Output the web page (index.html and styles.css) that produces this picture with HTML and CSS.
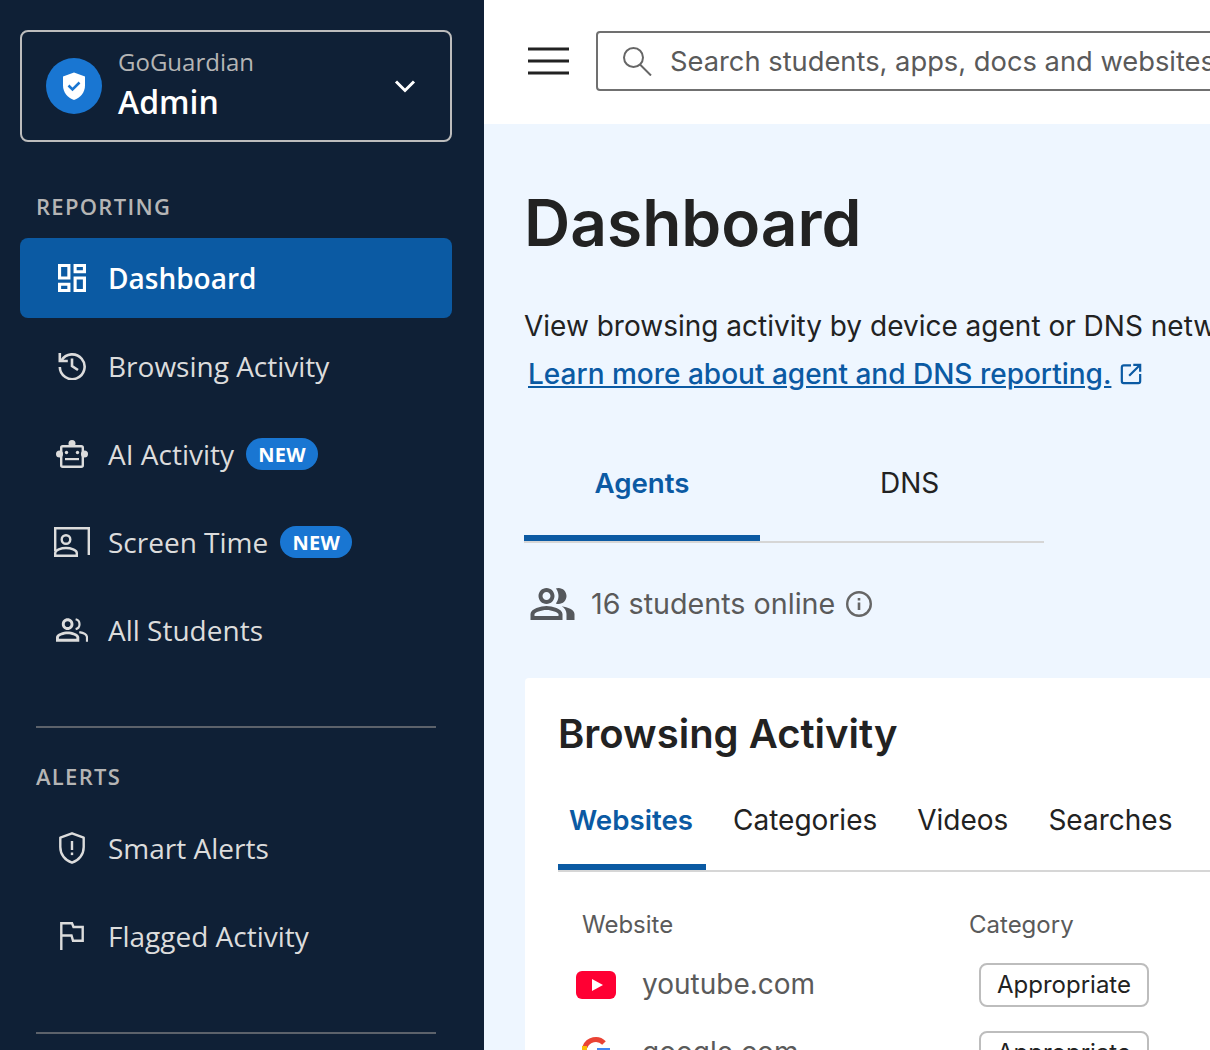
FILE: index.html
```html
<!DOCTYPE html>
<html lang="en">
<head>
<meta charset="utf-8">
<title>GoGuardian Admin Dashboard</title>
<link rel="stylesheet" href="styles.css">
</head>
<body>
<div class="app">
  <aside class="sidebar">
    <div class="brand">
      <svg class="brand-logo" viewBox="0 0 56 56"><circle cx="28" cy="28" r="28" fill="#1976d2"/><path d="M28 14.500l11 4v9c0 7-4.500 12-11 14.500-6.500-2.500-11-7.500-11-14.500v-9z" fill="#fff"/><path d="M22.500 27.500l4 4 7-7" fill="none" stroke="#1976d2" stroke-width="2.500"/></svg>
      <div class="brand-text">
        <span class="brand-company">GoGuardian</span>
        <span class="brand-product">Admin</span>
      </div>
      <svg class="brand-chevron" viewBox="0 0 22 14"><path d="M2 2.500l9 9 9-9" fill="none" stroke="#fff" stroke-width="3"/></svg>
    </div>

    <h2 class="nav-heading">REPORTING</h2>
    <ul class="nav-list">
      <li class="nav-item nav-item-active">
        <span class="nav-icon"><svg class="ic-dash" viewBox="3 3 18 18" fill="currentColor"><path d="M19 5v2h-4V5h4M9 5v6H5V5h4m10 8v6h-4v-6h4M9 17v2H5v-2h4M21 3h-8v6h8V3zM11 3H3v10h8V3zm10 8h-8v10h8V11zm-10 4H3v6h8v-6z"/></svg></span>
        <span>Dashboard</span>
      </li>
      <li class="nav-item">
        <span class="nav-icon"><svg class="ic-history" viewBox="0 0 28 28" fill="none" stroke="currentColor" stroke-width="2.600"><path d="M3.500 8.500A12.400 12.400 0 1 1 1.800 15"/><path d="M1.800 1v8h8"/><path d="M14 6.500V14l6 4"/></svg></span>
        <span>Browsing Activity</span>
      </li>
      <li class="nav-item">
        <span class="nav-icon"><svg class="ic-robot" viewBox="0 0 32 28" fill="currentColor"><rect x="5.200" y="6.200" width="21.600" height="20.600" rx="1.500" fill="none" stroke="currentColor" stroke-width="2.400"/><circle cx="16" cy="3.500" r="3.500"/><circle cx="3.500" cy="14" r="3.500"/><circle cx="28.500" cy="14" r="3.500"/><circle cx="10.500" cy="12.500" r="1.700"/><circle cx="21.500" cy="12.500" r="1.700"/><rect x="9" y="18" width="14" height="2.200"/></svg></span>
        <span>AI Activity</span><span class="badge">NEW</span>
      </li>
      <li class="nav-item">
        <span class="nav-icon"><svg class="ic-screen" viewBox="0 0 36 30" fill="none" stroke="currentColor" stroke-width="2.400"><path d="M1.200 24V1.200h33.600V28"/><circle cx="12" cy="12.500" r="4.300"/><path d="M1.200 28.800V26c0-3 6-5 10.800-5s10.800 2 10.800 5v2.800z"/></svg></span>
        <span>Screen Time</span><span class="badge">NEW</span>
      </li>
      <li class="nav-item">
        <span class="nav-icon"><svg class="ic-people" viewBox="1 4 22 16" fill="currentColor"><path d="M14.500 4.600A3.500 3.500 0 0 1 14.500 11.400M17 13.500C19.800 14 22.300 15.200 22.300 17V20" fill="none" stroke="currentColor" stroke-width="1.500"/><path d="M9,12c2.210,0,4-1.790,4-4c0-2.210-1.790-4-4-4S5,5.790,5,8C5,10.210,6.790,12,9,12z M9,6c1.100,0,2,0.900,2,2c0,1.100-0.900,2-2,2S7,9.100,7,8C7,6.900,7.900,6,9,6z"/><path d="M9,13c-2.670,0-8,1.340-8,4v3h16v-3C17,14.340,11.670,13,9,13z M15,18H3l0-0.990C3.200,16.290,6.300,15,9,15s5.800,1.290,6,2V18z"/></svg></span>
        <span>All Students</span>
      </li>
    </ul>

    <hr class="nav-divider">

    <h2 class="nav-heading nav-heading-alerts">ALERTS</h2>
    <ul class="nav-list">
      <li class="nav-item">
        <span class="nav-icon"><svg class="ic-shield" viewBox="0 0 26 32" fill="currentColor"><path d="M13 1.300L24.700 5.600V15C24.700 22.500 20 28.500 13 30.700C6 28.500 1.300 22.500 1.300 15V5.600Z" fill="none" stroke="currentColor" stroke-width="2.400" stroke-linejoin="round"/><rect x="11.800" y="9" width="2.400" height="9"/><rect x="11.800" y="20.500" width="2.400" height="2.600"/></svg></span>
        <span>Smart Alerts</span>
      </li>
      <li class="nav-item">
        <span class="nav-icon"><svg class="ic-flag" viewBox="0 0 24 28" fill="none" stroke="currentColor" stroke-width="2.400"><path d="M1.300 28V1.300H12L13.500 5H22.700V18.700H13L11.500 13.500H1.300"/></svg></span>
        <span>Flagged Activity</span>
      </li>
    </ul>

    <hr class="nav-divider">
  </aside>

  <div class="main">
    <header class="topbar">
      <svg class="menu-icon" viewBox="0 0 41 28"><path d="M0 2h41M0 14h41M0 26h41" stroke="#222" stroke-width="3"/></svg>
      <div class="search">
        <svg class="search-icon" viewBox="0 0 30 30" fill="none" stroke="#666" stroke-width="2"><circle cx="11.500" cy="11.500" r="9.500"/><path d="M18 18.500l11 11"/></svg>
        <span class="search-text">Search students, apps, docs and websites</span>
      </div>
    </header>

    <main class="content">
      <h1 class="page-title">Dashboard</h1>
      <p class="intro">View browsing activity by device agent or DNS network</p>
      <p class="intro-link"><a href="#">Learn more about agent and DNS reporting.</a><svg class="ext-icon" viewBox="0 0 24 24" fill="none" stroke="#0b5aa3" stroke-width="2.400"><path d="M12 2.500H4a2 2 0 0 0-2 2v15.500a2 2 0 0 0 2 2h16a2 2 0 0 0 2-2V12"/><path d="M10 14L21.500 2.500M14.500 2H22V9.500"/></svg></p>

      <div class="tabs">
        <span class="tab tab-agents">Agents</span>
        <span class="tab tab-dns">DNS</span>
      </div>

      <div class="online">
        <svg class="online-icon" viewBox="1 4 22 16" fill="#55585c"><path d="M16.670,13.130C18.040,14.060,19,15.320,19,17v3h4v-3C23,14.820,19.430,13.530,16.670,13.130z"/><path d="M15,12c2.210,0,4-1.790,4-4c0-2.210-1.790-4-4-4c-0.470,0-0.910,0.100-1.330,0.260C14.500,5.270,15,6.580,15,8s-0.500,2.730-1.330,3.740C14.090,11.900,14.530,12,15,12z"/><path d="M9,12c2.210,0,4-1.790,4-4c0-2.210-1.790-4-4-4S5,5.790,5,8C5,10.210,6.790,12,9,12z M9,6c1.100,0,2,0.900,2,2c0,1.100-0.900,2-2,2S7,9.100,7,8C7,6.900,7.900,6,9,6z"/><path d="M9,13c-2.670,0-8,1.340-8,4v3h16v-3C17,14.340,11.670,13,9,13z M15,18H3l0-0.990C3.200,16.290,6.300,15,9,15s5.800,1.290,6,2V18z"/></svg>
        <span class="online-text">16 students online</span>
        <svg class="info-icon" viewBox="0 0 26 26" fill="none" stroke="#666" stroke-width="2.400"><circle cx="13" cy="13" r="11.800"/><path d="M13 11.500V19" stroke-width="2.600"/><path d="M13 7v2.500" stroke-width="2.600"/></svg>
      </div>

      <section class="card">
        <h2 class="card-title">Browsing Activity</h2>
        <div class="card-tabs">
          <span class="card-tab card-tab-active">Websites</span>
          <span class="card-tab">Categories</span>
          <span class="card-tab">Videos</span>
          <span class="card-tab">Searches</span>
        </div>
        <div class="table">
          <div class="thead">
            <span class="th-site">Website</span>
            <span>Category</span>
          </div>
          <div class="row">
            <div class="site">
              <svg class="site-icon" viewBox="0 0 40 28"><rect width="40" height="28" rx="6" fill="#ff0033"/><path d="M16 8l11 6-11 6z" fill="#fff"/></svg>
              <span>youtube.com</span>
            </div>
            <span class="pill">Appropriate</span>
          </div>
          <div class="row">
            <div class="site">
              <svg class="site-icon google" viewBox="0 0 40 40"><path d="M9 14A11.500 11.500 0 0 1 28 10" fill="none" stroke="#ea4335" stroke-width="5"/><path d="M8.500 13v12" stroke="#fbbc05" stroke-width="5"/><path d="M21 15h13v6H21z" fill="#4285f4"/></svg>
              <span>google.com</span>
            </div>
            <span class="pill">Appropriate</span>
          </div>
        </div>
      </section>
    </main>
  </div>
</div>
</body>
</html>
```

FILE: styles.css
```css
* { box-sizing: border-box; }

html, body {
  margin: 0;
  height: 1050px;
  overflow: hidden;
}

.app {
  display: flex;
  height: 1050px;
  font-family: Inter, "Liberation Sans", sans-serif;
}

/* Sidebar */
.sidebar {
  flex: 0 0 484px;
  padding: 30px 32px 0 20px;
  background: #0f2036;
  color: #dcdcdc;
  font-family: "Open Sans", "Noto Sans", sans-serif;
}

.brand {
  display: flex;
  align-items: center;
  height: 112px;
  padding: 0 34px 0 24px;
  border: 2px solid #bdbdbd;
  border-radius: 8px;
}

.brand-logo { width: 56px; height: 56px; flex: none; }

.brand-text {
  display: flex;
  flex-direction: column;
  flex: 1;
  margin-left: 16px;
}

.brand-company {
  font-size: 24px;
  line-height: 32px;
  color: #b5b5b5;
}

.brand-product {
  font-size: 32px;
  line-height: 48px;
  font-weight: 600;
  color: #fff;
}

.brand-chevron { width: 22px; height: 14px; flex: none; }

.nav-heading {
  margin: 47px 0 15px 16px;
  font-size: 22px;
  line-height: 34px;
  font-weight: 600;
  letter-spacing: 1.300px;
  color: #b5b5b5;
}

.nav-heading-alerts { margin: 31px 0 15px 16px; }

.nav-list {
  margin: 0;
  padding: 0;
  list-style: none;
}

.nav-item {
  display: flex;
  align-items: center;
  height: 80px;
  margin-bottom: 8px;
  border-radius: 8px;
  font-size: 28px;
}

.nav-item-active {
  background: #0b5aa3;
  color: #fff;
  font-weight: 600;
}

.nav-icon {
  display: flex;
  align-items: center;
  justify-content: center;
  flex: none;
  width: 88px;
  padding-left: 16px;
}

.nav-icon svg { display: block; flex: none; }

.ic-dash { width: 28px; height: 28px; }
.ic-history { width: 28px; height: 28px; }
.ic-robot { width: 32px; height: 28px; }
.ic-screen { width: 36px; height: 30px; }
.ic-people { width: 32px; height: 24px; }
.ic-shield { width: 26px; height: 32px; }
.ic-flag { width: 24px; height: 28px; }

.badge {
  display: inline-flex;
  align-items: center;
  justify-content: center;
  width: 72px;
  height: 32px;
  margin-left: 12px;
  border-radius: 16px;
  background: #1976d2;
  color: #fff;
  font-size: 20px;
  font-weight: 700;
  letter-spacing: 0.300px;
}

.nav-divider {
  width: 400px;
  height: 2px;
  margin: 56px 0 0 16px;
  border: 0;
  background: #5c626b;
}

/* Main column */
.main {
  flex: 1;
  min-width: 0;
  overflow: hidden;
  display: flex;
  flex-direction: column;
  background: #eef6ff;
}

.topbar {
  display: flex;
  align-items: center;
  flex: none;
  height: 124px;
  padding: 0 0 2px 44px;
  background: #fff;
}

.menu-icon { width: 41px; height: 28px; flex: none; }

.search {
  display: flex;
  align-items: center;
  flex: none;
  width: 800px;
  height: 60px;
  margin-left: 27px;
  padding-left: 24px;
  border: 2px solid #707070;
  border-radius: 4px;
}

.search-icon { width: 30px; height: 30px; flex: none; }

.search-text {
  margin-left: 18px;
  font-size: 27.300px;
  color: #5a5a5a;
  white-space: nowrap;
}

.content {
  flex: 1;
  padding: 59px 0 0 40px;
}

.page-title {
  margin: 0;
  font-size: 64px;
  line-height: 80px;
  font-weight: 600;
  color: #222;
}

.intro, .intro-link {
  margin: 0;
  height: 48px;
  font-size: 28px;
  line-height: 48px;
  white-space: nowrap;
  color: #222;
}

.intro { margin-top: 39px; }

.intro-link {
  display: flex;
  align-items: center;
  padding-left: 4px;
}

.intro-link a {
  color: #0b5aa3;
  font-weight: 500;
  text-decoration: underline;
}

.ext-icon { width: 22px; height: 22px; margin-left: 9px; flex: none; }

.tabs {
  display: flex;
  width: 520px;
  margin-top: 28px;
  border-bottom: 2px solid #d6d6d6;
}

.tab {
  display: flex;
  align-items: center;
  height: 115px;
  padding-bottom: 2px;
  font-size: 28px;
  color: #222;
}

.tab-agents {
  width: 236px;
  justify-content: center;
  color: #0b5aa3;
  font-size: 27.700px;
  font-weight: 600;
  box-shadow: inset 0 -6px 0 #0b5aa3;
}

.tab-dns { padding-left: 120px; }

.online {
  display: flex;
  align-items: center;
  height: 36px;
  margin-top: 43px;
  padding-left: 6px;
  font-size: 28.700px;
  color: #5a5a5a;
}

.online-text { margin-top: -2px; }

.online-icon { width: 45px; height: 32px; flex: none; margin-right: 16px; }

.info-icon { width: 26px; height: 26px; margin-left: 11px; flex: none; }

.card {
  width: 900px;
  height: 420px;
  margin: 56px 0 0 1px;
  padding: 31px 33px 0;
  background: #fff;
  border-radius: 4px;
}

.card-title {
  margin: 0;
  font-size: 40px;
  line-height: 50px;
  font-weight: 600;
  color: #222;
}

.card-tabs {
  display: flex;
  gap: 16px;
  margin-top: 11px;
  border-bottom: 2px solid #d6d6d6;
}

.card-tab {
  display: flex;
  align-items: center;
  height: 100px;
  padding: 0 12px;
  font-size: 28px;
  color: #222;
}

.card-tab-active {
  margin-right: -1px;
  padding: 0 13px 0 11px;
  color: #0b5aa3;
  font-size: 27.700px;
  font-weight: 600;
  box-shadow: inset 0 -6px 0 #0b5aa3;
}

.table { margin-top: 38px; }

.thead {
  display: grid;
  grid-template-columns: 387px 1fr;
  height: 30px;
  padding-left: 24px;
  font-size: 24px;
  line-height: 30px;
  color: #5a5a5a;
}

.row {
  display: grid;
  grid-template-columns: 403px auto;
  justify-content: start;
  align-items: center;
  height: 44px;
  margin-top: 24px;
  padding-left: 18px;
}

.thead + .row { margin-top: 23px; }

.site {
  display: flex;
  align-items: center;
  font-size: 28px;
  line-height: 42px;
  color: #5a5a5a;
}

.site span { margin-top: -2px; }

.site-icon { width: 40px; height: 28px; flex: none; margin-right: 26px; }

.site-icon.google { height: 40px; }

.pill {
  display: flex;
  align-items: center;
  justify-content: center;
  width: 170px;
  height: 44px;
  padding-bottom: 2px;
  border: 2px solid #bdbdbd;
  border-radius: 8px;
  font-size: 24px;
  color: #222;
}
```
